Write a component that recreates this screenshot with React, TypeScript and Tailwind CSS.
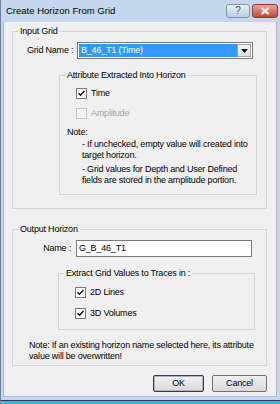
import React from 'react';

function CheckBox({ label, checked, disabled }: { label: string; checked?: boolean; disabled?: boolean }) {
  return (
    <div className="flex items-center h-[13px] pl-[16px]">
      <div
        className={`w-[11px] h-[11px] border flex items-center justify-center ${
          disabled ? 'border-[#c4c4c4] bg-[#f4f4f4]' : 'border-[#7a7a7a] bg-white'
        }`}
      >
        {checked && (
          <svg width="9" height="9" viewBox="0 0 9 9">
            <path d="M1.5 4.3 L3.5 6.3 L7.5 2" fill="none" stroke="#111" strokeWidth="1.4" />
          </svg>
        )}
      </div>
      <span className={`ml-[4px] ${disabled ? 'text-[#a3a3a3]' : 'text-black'}`}>{label}</span>
    </div>
  );
}

function GroupBox({ title, className, children }: { title: string; className: string; children?: React.ReactNode }) {
  return (
    <div className={`relative border border-[#d5d5d5] ${className}`}>
      <span className="absolute -top-[7px] left-[5px] px-[2px] bg-[#f0f0f0] leading-[12px]">{title}</span>
      {children}
    </div>
  );
}

export default function App() {
  return (
    <div
      className="w-[280px] h-[404px] bg-[#c4d7ee] border-l border-[#6d819a] text-[9px] tracking-[-0.2px] text-black overflow-hidden"
      style={{ fontFamily: '"Liberation Sans", Arial, sans-serif' }}
    >
      {/* title bar */}
      <div className="h-[22px] flex items-center pl-[5px] pr-[2px]">
        <span className="text-[9.5px] tracking-normal text-black">Create Horizon From Grid</span>
        <div className="ml-auto flex items-center gap-[2px]">
          <div className="w-[24px] h-[14px] rounded-[3px] border border-[#7d93b0] bg-gradient-to-b from-[#eef3fa] to-[#bccde2] flex items-center justify-center text-[10px] text-[#3a4d66] leading-none">
            ?
          </div>
          <div className="w-[26px] h-[14px] rounded-[3px] border border-[#8c3a32] bg-gradient-to-b from-[#e9a595] to-[#c2473b] flex items-center justify-center">
            <svg width="10" height="8" viewBox="0 0 10 8">
              <path d="M1.5 1 L8.5 7 M8.5 1 L1.5 7" stroke="white" strokeWidth="2" />
            </svg>
          </div>
        </div>
      </div>

      {/* client area */}
      <div className="ml-[2px] w-[274px] h-[375px] bg-[#f0f0f0] border border-[#a9bbd0] border-t-0 pt-[9px]">
        <GroupBox title="Input Grid" className="ml-[8px] w-[255px] h-[178px]">
          <div className="flex items-center mt-[10px]">
            <span className="ml-[14px] w-[50px]">Grid Name :</span>
            <div className="w-[176px] h-[17px] border border-[#7a7a7a] bg-white flex p-[1px]">
              <div className="flex-1 bg-[#3399ff] text-white pl-[2px] flex items-center">B_46_T1 (Time)</div>
              <div className="w-[14px] border border-[#a5a5a5] bg-gradient-to-b from-[#f4f4f4] to-[#dcdcdc] flex items-center justify-center">
                <svg width="7" height="4" viewBox="0 0 7 4">
                  <path d="M0 0 H7 L3.5 4 Z" fill="#111" />
                </svg>
              </div>
            </div>
          </div>

          <GroupBox title="Attribute Extracted Into Horizon" className="ml-[46px] mt-[16px] w-[198px] h-[120px]">
            <div className="pt-[11px] flex flex-col gap-[7px]">
              <CheckBox label="Time" checked />
              <CheckBox label="Amplitude" disabled />
            </div>
            <div className="mt-[6px] pl-[7px] leading-[12px]">Note:</div>
            <div className="pl-[22px] pr-[4px] leading-[11px]">
              <p className="mt-[1px]">- If unchecked, empty value will created into target horizon.</p>
              <p className="mt-[3px]">- Grid values for Depth and User Defined fields are stored in the amplitude portion.</p>
            </div>
          </GroupBox>
        </GroupBox>

        <GroupBox title="Output Horizon" className="ml-[8px] mt-[20px] w-[255px] h-[137px]">
          <div className="flex items-center mt-[10px]">
            <span className="w-[59px] pr-[1px] text-right">Name :</span>
            <div className="ml-[4px] w-[176px] h-[17px] border border-[#7a7a7a] bg-white flex items-center pl-[2px]">G_B_46_T1</div>
          </div>

          <GroupBox title="Extract Grid Values to Traces in :" className="ml-[45px] mt-[16px] w-[197px] h-[57px]">
            <div className="pt-[12px] flex flex-col gap-[8px]">
              <CheckBox label="2D Lines" checked />
              <CheckBox label="3D Volumes" checked />
            </div>
          </GroupBox>

          <p className="mt-[10px] pl-[16px] pr-[10px] leading-[11px]">
            Note: If an existing horizon name selected here, its attribute value will be overwritten!
          </p>
        </GroupBox>

        <div className="flex justify-end gap-[8px] mr-[9px] mt-[9px]">
          <div className="w-[51px] h-[17px] border border-[#3c3c3c] rounded-[2px] bg-gradient-to-b from-[#f2f2f2] to-[#d9d9d9] shadow-[inset_0_0_0_1px_#9fb7d2] flex items-center justify-center">
            OK
          </div>
          <div className="w-[55px] h-[17px] border border-[#707070] rounded-[2px] bg-gradient-to-b from-[#f2f2f2] to-[#d9d9d9] flex items-center justify-center">
            Cancel
          </div>
        </div>
      </div>
      <div className="h-[3px]" />
      <div className="h-[1px] bg-[#2a3a4e]" />
      <div className="h-[3px] bg-[#3fb6d6]" />
    </div>
  );
}
